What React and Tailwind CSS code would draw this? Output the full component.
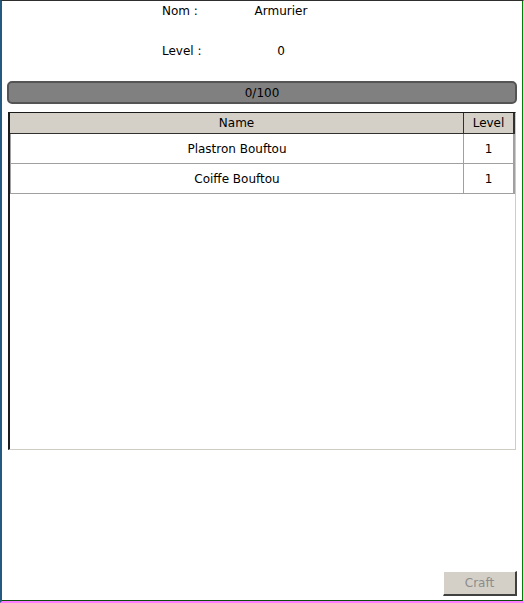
export default function App() {
  const font = { fontFamily: '"DejaVu Sans", Verdana, sans-serif' };
  return (
    <div
      className="w-[524px] h-[603px] bg-white flex flex-col border-t border-t-[#2e2e2e] border-l-2 border-l-[#245a80] border-r border-r-[#d8d8d8] border-b-2 border-b-[#ff7bff] text-[12px] text-black"
      style={font}
    >
      <div className="flex-1 flex flex-col border-r border-r-[#0a7a0a] border-b border-b-[#0b4d0b] min-h-0">
        <div className="pt-[3px] flex flex-col gap-[26px]">
          <div className="flex h-[14px] items-center leading-[14px]">
            <div className="ml-[160px] w-[69px]">Nom :</div>
            <div className="w-[100px] text-center">Armurier</div>
          </div>
          <div className="flex h-[14px] items-center leading-[14px]">
            <div className="ml-[160px] w-[69px]">Level :</div>
            <div className="w-[100px] text-center">0</div>
          </div>
        </div>

        <div className="mt-[23px] ml-[5px] mr-[5px] h-[23px] rounded-[5px] bg-[#808080] border-2 border-[#545454] flex items-center justify-center leading-none">
          0/100
        </div>

        <div className="mt-[8px] ml-[6px] mr-[6px] h-[338px] border-t border-l-2 border-t-[#1a1a1a] border-l-[#1a1a1a] border-b border-r border-b-[#cfccc4] border-r-[#cfccc4] flex flex-col">
          <div className="flex h-[21px] shrink-0 bg-[#d4d0c8] border-b border-b-[#303030] leading-none">
            <div className="flex-1 flex items-center justify-center border-r border-r-[#303030]">Name</div>
            <div className="w-[51px] flex items-center justify-center border-r-2 border-r-[#303030]">Level</div>
          </div>
          {["Plastron Bouftou", "Coiffe Bouftou"].map((n) => (
            <div key={n} className="flex h-[30px] shrink-0 border-b border-b-[#a0a0a0] leading-none">
              <div className="flex-1 flex items-center justify-center border-l border-l-[#a0a0a0] border-r border-r-[#a0a0a0]">{n}</div>
              <div className="w-[51px] flex items-center justify-center border-r-2 border-r-[#a0a0a0]">1</div>
            </div>
          ))}
        </div>

        <div className="flex-1" />
        <div className="flex justify-end mr-[5px] mb-[4px]">
          <div className="w-[74px] h-[25px] bg-[#d4d0c8] border-t border-l border-t-white border-l-white border-b-2 border-r-2 border-b-[#404040] border-r-[#404040] flex items-center justify-center text-[#8c8c8c] leading-none">
            Craft
          </div>
        </div>
      </div>
    </div>
  );
}
